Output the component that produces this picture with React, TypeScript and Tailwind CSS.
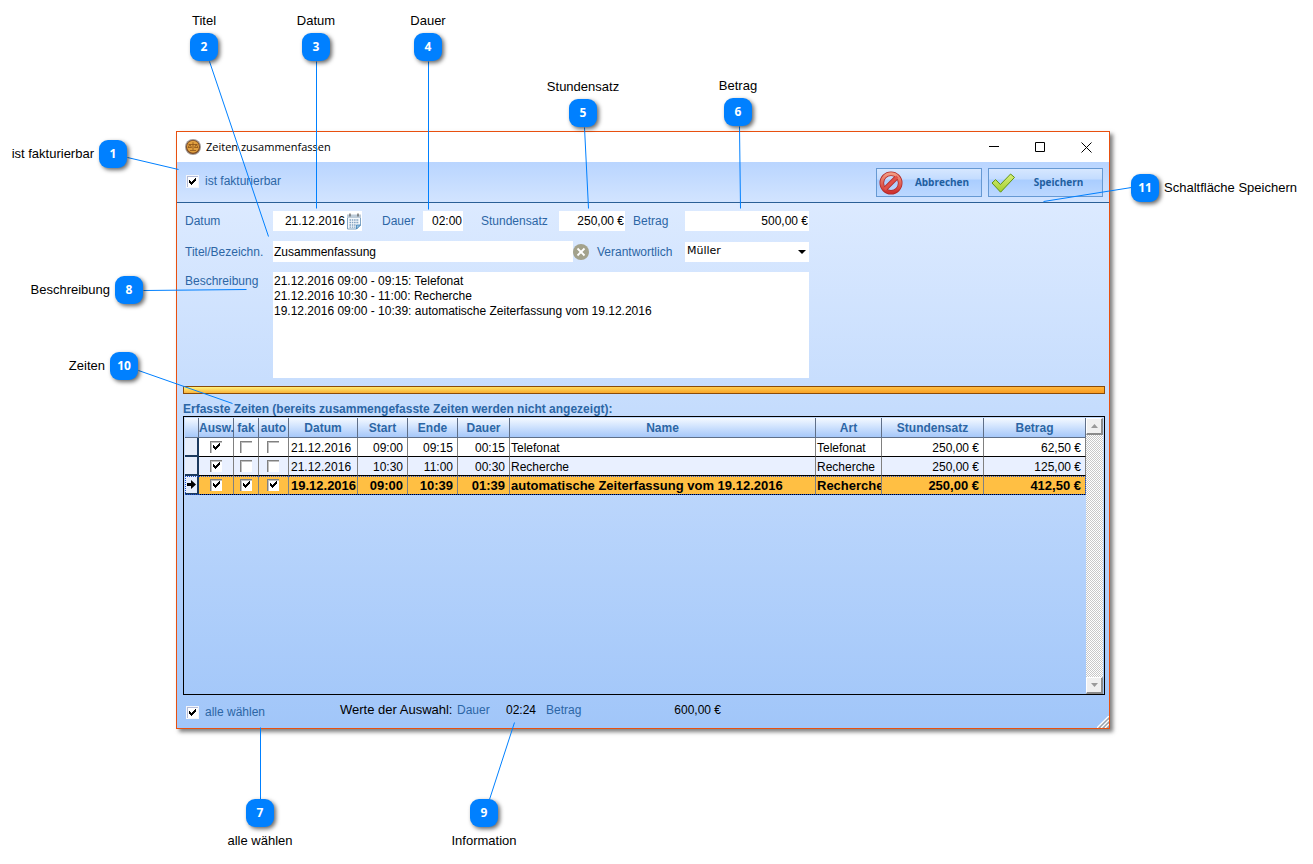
// App.tsx
import React from "react";

interface TimeEntry {
  selected: boolean;
  billable: boolean;
  auto: boolean;
  date: string;
  start: string;
  end: string;
  duration: string;
  name: string;
  kind: string;
  rate: string;
  amount: string;
}

interface CalloutItem {
  nr: number;
  text: string;
  x: number;
  y: number;
  side: "top" | "bottom" | "left" | "right";
  line: [number, number, number, number];
}

const entries: TimeEntry[] = [
  {
    selected: true,
    billable: false,
    auto: false,
    date: "21.12.2016",
    start: "09:00",
    end: "09:15",
    duration: "00:15",
    name: "Telefonat",
    kind: "Telefonat",
    rate: "250,00 €",
    amount: "62,50 €",
  },
  {
    selected: true,
    billable: false,
    auto: false,
    date: "21.12.2016",
    start: "10:30",
    end: "11:00",
    duration: "00:30",
    name: "Recherche",
    kind: "Recherche",
    rate: "250,00 €",
    amount: "125,00 €",
  },
  {
    selected: true,
    billable: true,
    auto: true,
    date: "19.12.2016",
    start: "09:00",
    end: "10:39",
    duration: "01:39",
    name: "automatische Zeiterfassung vom 19.12.2016",
    kind: "Recherche",
    rate: "250,00 €",
    amount: "412,50 €",
  },
];

const columns = [
  { title: "", width: "w-[14px]" },
  { title: "Ausw.", width: "w-[35px]" },
  { title: "fak", width: "w-[25px]" },
  { title: "auto", width: "w-[30px]" },
  { title: "Datum", width: "w-[69px]" },
  { title: "Start", width: "w-[50px]" },
  { title: "Ende", width: "w-[50px]" },
  { title: "Dauer", width: "w-[52px]" },
  { title: "Name", width: "" },
  { title: "Art", width: "w-[66px]" },
  { title: "Stundensatz", width: "w-[102px]" },
  { title: "Betrag", width: "w-[102px]" },
];

const callouts: CalloutItem[] = [
  { nr: 1, text: "ist fakturierbar", x: 113, y: 154, side: "left", line: [127, 157, 178, 169] },
  { nr: 2, text: "Titel", x: 204, y: 47, side: "top", line: [209, 61, 268, 236] },
  { nr: 3, text: "Datum", x: 316, y: 47, side: "top", line: [316, 61, 316, 208] },
  { nr: 4, text: "Dauer", x: 428, y: 47, side: "top", line: [428, 61, 428, 209] },
  { nr: 5, text: "Stundensatz", x: 583, y: 113, side: "top", line: [584, 127, 588, 208] },
  { nr: 6, text: "Betrag", x: 738, y: 112, side: "top", line: [739, 126, 740, 208] },
  { nr: 7, text: "alle wählen", x: 260, y: 813, side: "bottom", line: [260, 727, 260, 800] },
  { nr: 8, text: "Beschreibung", x: 129, y: 290, side: "left", line: [143, 290, 246, 289] },
  { nr: 9, text: "Information", x: 484, y: 813, side: "bottom", line: [489, 799, 514, 722] },
  { nr: 10, text: "Zeiten", x: 124, y: 366, side: "left", line: [138, 370, 232, 403] },
  { nr: 11, text: "Schaltfläche Speichern", x: 1145, y: 188, side: "right", line: [1131, 187, 1043, 201] },
];

const sideClasses = {
  top: "bottom-full left-1/2 -translate-x-1/2 mb-1",
  bottom: "top-full left-1/2 -translate-x-1/2 mt-1.5",
  left: "right-full top-1/2 -translate-y-1/2 mr-[5px]",
  right: "left-full top-1/2 -translate-y-1/2 ml-[5px]",
};

function Callout({ item }: { item: CalloutItem }) {
  return (
    <div
      className="absolute size-7 -translate-x-1/2 -translate-y-1/2 flex items-center justify-center rounded-[9px] bg-[#0080ff] text-white shadow-[2px_2px_4px_rgba(0,0,0,0.6)]"
      style={{ left: item.x, top: item.y }}
    >
      <span className="font-['Open_Sans',sans-serif] text-[12px] font-bold">{item.nr}</span>
      <span className={`absolute whitespace-nowrap text-[13px] leading-4 text-black ${sideClasses[item.side]}`}>
        {item.text}
      </span>
    </div>
  );
}

function CheckBox({
  label,
  defaultChecked,
  inTable,
}: {
  label: string;
  defaultChecked: boolean;
  inTable?: boolean;
}) {
  return (
    <label className={`inline-grid items-center align-top ${inTable ? "" : "grid-cols-[auto_auto] gap-x-1.5"}`}>
      <input
        type="checkbox"
        defaultChecked={defaultChecked}
        aria-label={label}
        className={`peer col-start-1 row-start-1 appearance-none bg-white ${
          inTable
            ? "size-3 border-t border-l border-[#808080] shadow-[inset_1px_1px_0_#c0c0c0]"
            : "size-[13px] border border-[#f4f6fb] shadow-[inset_1px_1px_0_#b4bcd8]"
        }`}
      />
      <svg
        viewBox="0 0 13 13"
        shapeRendering="crispEdges"
        className="invisible peer-checked:visible pointer-events-none col-start-1 row-start-1 size-[13px]"
      >
        <path
          fill="#000"
          d="M3 5h1v3H3zM4 6h1v3H4zM5 7h1v3H5zM6 6h1v3H6zM7 5h1v3H7zM8 4h1v3H8zM9 3h1v3H9z"
        />
      </svg>
      {!inTable && <span className="text-[12px] leading-4 text-[#2c66a5]">{label}</span>}
    </label>
  );
}

function TitleBar() {
  return (
    <div className="flex h-[30px] items-center bg-white pl-2">
      <svg viewBox="0 0 16 16" className="size-4">
        <circle cx="8" cy="8" r="8" fill="#a09a98" />
        <circle cx="8" cy="8" r="7" fill="#7d4a20" />
        <circle cx="8" cy="7.8" r="6" fill="#e0a040" />
        <path
          d="M8 3.2v8M3.5 5.5h9M3 8.5h3.6M9.4 8.5H13M4.8 5.5 3.2 8.4M4.8 5.5l1.7 2.9M11.2 5.5 9.6 8.4M11.2 5.5l1.7 2.9M5 11.5h6"
          stroke="#8a5218"
          strokeWidth="0.8"
          fill="none"
        />
      </svg>
      <h1 className="ml-[5px] flex-1 font-['Open_Sans',sans-serif] text-[11px] text-black">
        Zeiten zusammenfassen
      </h1>
      <button aria-label="Minimieren" className="flex h-full w-[45px] items-center justify-center">
        <svg viewBox="0 0 11 11" className="size-[11px]" stroke="#000">
          <path d="M0 4.500h10" />
        </svg>
      </button>
      <button aria-label="Maximieren" className="flex h-full w-[46px] items-center justify-center">
        <svg viewBox="0 0 11 11" className="size-[11px]" stroke="#000" fill="none">
          <path d="M.5 .5h9v9h-9z" />
        </svg>
      </button>
      <button aria-label="Schließen" className="flex h-full w-[46px] items-center justify-center">
        <svg viewBox="0 0 11 11" className="size-[11px]" stroke="#000" fill="none">
          <path d="M.5 .5l10 10M10.5 .5l-10 10" />
        </svg>
      </button>
    </div>
  );
}

const toolButton =
  "flex h-[29px] items-center border border-[#6699d3] bg-[linear-gradient(#d6e7ff_0%,#c3dcff_38%,#a9cdff_40%,#bcd8ff_100%)] pl-0.5 font-['Open_Sans',sans-serif] text-[10px] font-bold text-[#1f5f9f]";

function Toolbar() {
  return (
    <div className="flex h-[41px] items-start gap-1.5 border-b border-[#2a5f96] bg-linear-to-b from-[#b9d5ff] to-[#d2e4ff] pt-1.5 pr-1.5 pl-[9px]">
      <div className="flex-1 pt-[5px]">
        <CheckBox label="ist fakturierbar" defaultChecked />
      </div>
      <button className={`${toolButton} w-[106px]`}>
        <svg viewBox="0 0 24 24" className="size-6">
          <defs>
            <linearGradient id="stop" x1="0" y1="0" x2="0" y2="1">
              <stop offset="0" stopColor="#f39a82" />
              <stop offset="1" stopColor="#cf3230" />
            </linearGradient>
          </defs>
          <circle cx="12" cy="12" r="9.2" fill="none" stroke="#b02a2a" strokeWidth="4.6" />
          <path d="M6 18 18 6" stroke="#b02a2a" strokeWidth="4.6" />
          <circle cx="12" cy="12" r="9.2" fill="none" stroke="url(#stop)" strokeWidth="3" />
          <path d="M5.6 18.4 18.4 5.6" stroke="#e0524a" strokeWidth="3" />
        </svg>
        <span className="flex-1 text-center">Abbrechen</span>
      </button>
      <button className={`${toolButton} w-[115px]`}>
        <svg viewBox="0 0 24 24" className="size-6">
          <defs>
            <linearGradient id="ok" x1="0" y1="0" x2="0" y2="1">
              <stop offset="0" stopColor="#d8ee7c" />
              <stop offset="1" stopColor="#a3cf2c" />
            </linearGradient>
          </defs>
          <path
            d="M1 12 4.600 8.600 9.400 13.500 19.600 3 23.500 6.400 9.600 21.200z"
            fill="url(#ok)"
            stroke="#5f9413"
            strokeWidth="1"
            strokeLinejoin="round"
          />
        </svg>
        <span className="flex-1 text-center">Speichern</span>
      </button>
    </div>
  );
}

const labelText = "text-[12px] leading-4 text-[#2c66a5]";
const fieldText = "bg-white text-[12px] leading-4 text-black outline-none";

function EntryForm() {
  return (
    <form className="flex flex-col gap-2.5 pt-2 pl-2">
      <div className="flex h-5 items-center">
        <label htmlFor="datum" className={`${labelText} w-[88px]`}>
          Datum
        </label>
        <div className="flex h-5 w-[89px] items-center bg-white">
          <input id="datum" defaultValue="21.12.2016" className={`${fieldText} w-[73px] pr-px text-right`} />
          <svg viewBox="0 0 16 17" className="h-[17px] w-4">
            <path d="M1.500 2.500h13v9.500l-4 4h-9z" fill="#f4f8fc" stroke="#7fa3c2" />
            <path d="M1 1.500h14V5H1z" fill="#bccbd8" />
            <path d="M4 .5v3M12 .5v3" stroke="#555" strokeWidth="1.2" />
            <path
              d="M3.500 7h9.500M3.500 9.500h9.500M3.500 12h7M3.500 14.200h6"
              stroke="#7f9fbf"
              strokeWidth="1.300"
              strokeDasharray="1.500 0.800"
            />
            <path d="M10.500 16v-4h4z" fill="#9cc6e4" stroke="#3b7fb5" strokeWidth="0.800" />
          </svg>
        </div>
        <label htmlFor="dauer" className={`${labelText} ml-5 w-[41px]`}>
          Dauer
        </label>
        <input id="dauer" defaultValue="02:00" className={`${fieldText} h-5 w-10 pr-px text-right`} />
        <label htmlFor="satz" className={`${labelText} ml-[18px] w-[78px]`}>
          Stundensatz
        </label>
        <input id="satz" defaultValue="250,00 €" className={`${fieldText} h-5 w-[66px] pr-px text-right`} />
        <label htmlFor="betrag" className={`${labelText} ml-2 w-[52px]`}>
          Betrag
        </label>
        <input id="betrag" defaultValue="500,00 €" className={`${fieldText} h-5 w-[124px] pr-px text-right`} />
      </div>

      <div className="flex h-[21px] items-center">
        <label htmlFor="titel" className={`${labelText} w-[88px]`}>
          Titel/Bezeichn.
        </label>
        <input id="titel" defaultValue="Zusammenfassung" className={`${fieldText} h-[21px] w-[300px] pl-px`} />
        <button type="button" aria-label="Titel leeren" className="size-4">
          <svg viewBox="0 0 16 16" className="size-4">
            <circle cx="8" cy="8" r="8" fill="#a3a28c" />
            <path d="M4.500 4.500l7 7M11.500 4.500l-7 7" stroke="#fff" strokeWidth="1.800" />
          </svg>
        </button>
        <label htmlFor="verantwortlich" className={`${labelText} ml-2 w-[88px]`}>
          Verantwortlich
        </label>
        <div className="relative flex h-5 w-[124px]">
          <select
            id="verantwortlich"
            className="h-5 w-full appearance-none bg-white pl-0.5 font-['DejaVu_Sans',sans-serif] text-[11px] text-black"
          >
            <option>Müller</option>
          </select>
          <svg viewBox="0 0 8 4" className="pointer-events-none absolute top-2 right-[3px] h-1 w-2">
            <path d="M0 0h8L4 4z" />
          </svg>
        </div>
      </div>

      <div className="flex items-start">
        <label htmlFor="beschreibung" className={`${labelText} w-[88px] pt-px`}>
          Beschreibung
        </label>
        <textarea
          id="beschreibung"
          defaultValue={
            "21.12.2016 09:00 - 09:15: Telefonat\n21.12.2016 10:30 - 11:00: Recherche\n19.12.2016 09:00 - 10:39: automatische Zeiterfassung vom 19.12.2016"
          }
          className="h-[106px] w-[536px] resize-none bg-white pt-0.5 pl-px text-[12px] leading-[15px] text-black outline-none"
        />
      </div>
    </form>
  );
}

function EntryRow({ entry, index }: { entry: TimeEntry; index: number }) {
  const active = index === 2;
  const cell =
    "h-[19px] overflow-hidden whitespace-nowrap border-r border-b border-r-[#808080] border-b-black px-px pt-0.5 pb-0 leading-4";
  const rowColor = active
    ? "bg-[#ffbf43] text-[13px] font-bold outline-1 -outline-offset-1 outline-dotted outline-[#1a4fd0]"
    : index % 2
      ? "bg-[#e9f0ff]"
      : "bg-white";
  return (
    <tr className={rowColor}>
      <td className="h-[19px] border-r-2 border-b-2 border-[#1c3a5e] bg-[#e6eefc] p-0">
        {active && (
          <svg viewBox="0 0 10 9" className="mx-auto h-[9px] w-2.5">
            <path d="M1 3h4V0l5 4.5L5 9V6H1z" />
          </svg>
        )}
      </td>
      <td className={`${cell} text-center`}>
        <CheckBox inTable label="Auswahl" defaultChecked={entry.selected} />
      </td>
      <td className={`${cell} text-center`}>
        <CheckBox inTable label="fakturierbar" defaultChecked={entry.billable} />
      </td>
      <td className={`${cell} text-center`}>
        <CheckBox inTable label="automatisch" defaultChecked={entry.auto} />
      </td>
      <td className={`${cell} pl-0.5`}>{entry.date}</td>
      <td className={`${cell} pr-1 text-right`}>{entry.start}</td>
      <td className={`${cell} pr-1 text-right`}>{entry.end}</td>
      <td className={`${cell} pr-1 text-right`}>{entry.duration}</td>
      <td className={cell}>{entry.name}</td>
      <td className={cell}>{entry.kind}</td>
      <td className={`${cell} pr-1 text-right`}>{entry.rate}</td>
      <td className={`${cell} pr-1 text-right`}>{entry.amount}</td>
    </tr>
  );
}

const scrollButton =
  "flex h-[17px] w-full items-center justify-center border-t border-l border-r-2 border-b-2 border-t-white border-l-white border-r-[#8a8a8a] border-b-[#8a8a8a] bg-[#f0f0f0]";

function EntryTable() {
  return (
    <div className="flex h-[279px] border border-black pt-px pr-px pl-px">
      <div className="min-w-0 flex-1">
        <table className="w-full table-fixed border-separate border-spacing-0 text-[12px]">
          <thead>
            <tr>
              {columns.map((c, i) => (
                <th
                  key={i}
                  className={`${c.width} h-5 whitespace-nowrap border-r border-b border-[#5f6f88] bg-linear-to-b from-[#f4f9ff] to-[#a6c8fa] p-0 font-bold text-[#2c66a5]`}
                >
                  {c.title}
                </th>
              ))}
            </tr>
          </thead>
          <tbody>
            {entries.map((entry, i) => (
              <EntryRow key={i} entry={entry} index={i} />
            ))}
          </tbody>
        </table>
      </div>
      <div className="flex w-[17px] flex-col justify-between bg-[repeating-conic-gradient(#ffffff_0_25%,#c8c8c8_0_50%)] bg-size-[2px_2px]">
        <button aria-label="Nach oben" className={scrollButton}>
          <svg viewBox="0 0 7 4" className="h-1 w-[7px]" fill="#9a9a9a">
            <path d="M0 4h7L3.500 0z" />
          </svg>
        </button>
        <button aria-label="Nach unten" className={scrollButton}>
          <svg viewBox="0 0 7 4" className="h-1 w-[7px]" fill="#9a9a9a">
            <path d="M0 0h7L3.500 4z" />
          </svg>
        </button>
      </div>
    </div>
  );
}

function StatusBar() {
  return (
    <div className="flex h-[33px] items-start pt-[7px] pl-[9px] text-[13px] leading-4">
      <div className="w-[154px] pt-0.5">
        <CheckBox label="alle wählen" defaultChecked />
      </div>
      <span className="w-[117px] text-black">Werte der Auswahl:</span>
      <span className="w-[49px] text-[12px] text-[#2c66a5]">Dauer</span>
      <span className="w-10 text-[12px] text-black">02:24</span>
      <span className="w-[75px] text-[12px] text-[#2c66a5]">Betrag</span>
      <span className="w-[100px] text-right text-[12px] text-black">600,00 €</span>
      <svg viewBox="0 0 12 12" className="mt-auto ml-auto size-3">
        <path d="M0 12 12 0v12z" fill="#9aa0a8" />
        <path d="M0 12 12 0M4 12l8-8M8 12l4-4" stroke="#fff" strokeWidth="1.4" />
      </svg>
    </div>
  );
}

export default function App() {
  return (
    <div className="relative min-h-screen bg-white pt-[131px] pr-[203px] pb-[135px] pl-[176px] font-['Liberation_Sans',sans-serif]">
      <main className="border border-[#e8500f] shadow-[3px_3px_4px_rgba(0,0,0,0.5)]">
        <TitleBar />
        <Toolbar />
        <div className="bg-linear-to-b from-[#dceaff] to-[#a1c6f9]">
          <EntryForm />
          <div className="mt-2 mr-1 ml-1.5 h-2 border border-[#8a4b08] bg-[linear-gradient(90deg,#fff480_0%,#ffe465_30%,#ffc84a_65%,#ffb53c_100%)]">
            <div className="h-full bg-linear-to-b from-transparent to-[#f58a10]/60" />
          </div>
          <h2 className="mt-2 ml-1.5 text-[12px] leading-[14px] font-bold text-[#2c66a5]">
            Erfasste Zeiten (bereits zusammengefasste Zeiten werden nicht angezeigt):
          </h2>
          <div className="mr-1 ml-1.5">
            <EntryTable />
          </div>
          <StatusBar />
        </div>
      </main>

      <svg className="pointer-events-none absolute top-0 left-0 size-full" stroke="#0080ff" strokeWidth="1">
        <g transform="translate(0.5 0.5)">
          {callouts.map((c) => (
            <line key={c.nr} x1={c.line[0]} y1={c.line[1]} x2={c.line[2]} y2={c.line[3]} />
          ))}
        </g>
      </svg>
      {callouts.map((c) => (
        <Callout key={c.nr} item={c} />
      ))}
    </div>
  );
}
